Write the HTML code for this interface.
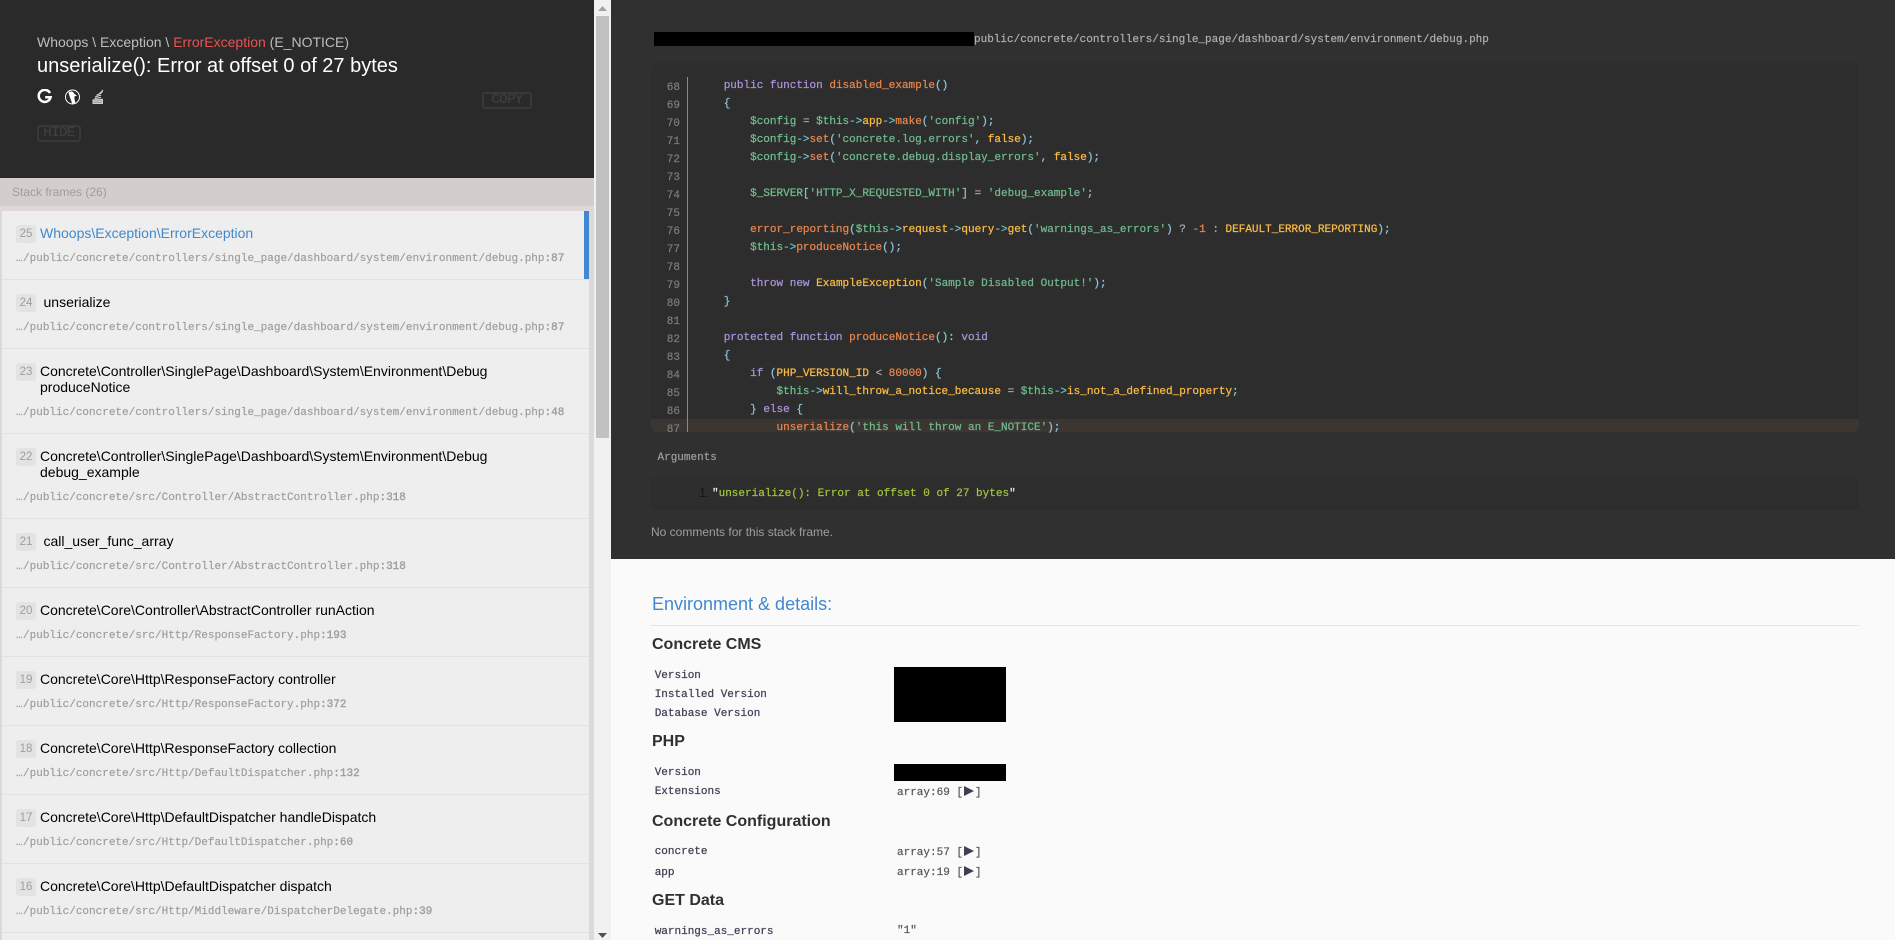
<!DOCTYPE html>
<html lang="en">
<head>
<meta charset="utf-8">
<title>Whoops! There was an error.</title>
<style>
*{box-sizing:border-box;margin:0;padding:0}
html,body{width:1895px;height:940px;overflow:hidden;background:#fafafa;font-family:"Liberation Sans",Arial,sans-serif}
.a{position:absolute;white-space:pre}
.m{font-family:"Liberation Mono",monospace;font-size:11px;-webkit-text-stroke:.2px}
#left{position:absolute;left:0;top:0;width:594px;height:940px;background:#ded8d8;overflow:hidden}
#hdr{position:absolute;left:0;top:0;width:594px;height:178px;background:#2a2a2a}
#sfh{position:absolute;left:0;top:178px;width:594px;height:28px;background:#d3cdcd}
.f{position:absolute;left:2px;width:587px;background:#eee;border-bottom:1px solid #e2e2e2}
.n{position:absolute;left:14px;top:14px;width:20px;height:18px;background:#e3e3e3;border-radius:3px;color:#a29d9d;font-size:11.5px;line-height:19px;text-align:center}
.t{position:absolute;left:38px;top:14px;font-size:14px;line-height:16px;color:#000;white-space:pre}
.t.x{left:41.5px}
.p{position:absolute;left:14px;bottom:13px;font-family:"Liberation Mono",monospace;font-size:11px;line-height:14px;color:#a29d9d;white-space:pre;-webkit-text-stroke:.2px}
.p b{font-weight:normal;-webkit-text-stroke:.4px}
.p i{font-style:normal;letter-spacing:.4px}
#sb{position:absolute;left:594px;top:0;width:17px;height:940px;background:#f1f1f1}
#th{position:absolute;left:2px;top:16px;width:13px;height:422px;background:#c1c1c1}
#dark{position:absolute;left:611px;top:0;width:1284px;height:559px;background:#303030}
.blk{position:absolute;background:#000}
.cb{position:absolute;background:#2d2d2d;border-radius:6px}
.ln{position:absolute;left:660px;width:20px;text-align:right;color:#7d7d7d;font-family:"Liberation Mono",monospace;font-size:11px;line-height:18px;margin-top:2px;-webkit-text-stroke:.2px}
#code{position:absolute;left:697.3px;top:77px;font-family:"Liberation Mono",monospace;font-size:11px;line-height:18px;color:#c9d1d9;white-space:pre;-webkit-text-stroke:.25px}
.k{color:#ab93dc}.fn{color:#e8854c}.v{color:#6cbf8b}.o{color:#68c3c4}.y{color:#fbbb42}.s{color:#6fb98c}.c{color:#8cc2d6}.g{color:#a9a9a9}.nm{color:#e8854c}
.h{position:absolute;left:652px;font-size:16px;font-weight:bold;color:#303030;line-height:20px;white-space:pre}
.l{position:absolute;left:654.7px;font-family:"Liberation Mono",monospace;font-size:11px;line-height:14px;color:#463c54;white-space:pre;-webkit-text-stroke:.25px}
.d{position:absolute;left:897px;font-family:"Liberation Mono",monospace;font-size:11px;line-height:14px;color:#555;white-space:pre;-webkit-text-stroke:.2px}
.d u{display:inline-block;width:0;height:0;border-left:10px solid #463c54;border-top:5.5px solid transparent;border-bottom:5.5px solid transparent;margin:0 1px 0 1px;vertical-align:-1px;text-decoration:none}
.btn{position:absolute;border:2px solid #383838;border-radius:3px;color:#3e3e3e;font-family:"Liberation Mono",monospace;font-size:14px;letter-spacing:-.6px;line-height:13px;text-align:center;-webkit-text-stroke:.3px}
</style>
</head>
<body>
<div id="left">
  <div id="hdr">
    <div class="a" style="left:37px;top:34px;font-size:14px;line-height:16px;color:#bebebe">Whoops \ Exception \ <span style="color:#e95353">ErrorException</span> (E_NOTICE)</div>
    <div class="a" style="left:37px;top:54px;font-size:20px;line-height:24px;color:#fff">unserialize(): Error at offset 0 of 27 bytes</div>
    <svg class="a" style="left:37px;top:89px" width="16" height="16" viewBox="0 0 16 16"><path d="M13 4A6 6 0 1 0 13.6 8.2H8.2" fill="none" stroke="#fff" stroke-width="2.5"/></svg>
    <svg class="a" style="left:64px;top:89px" width="17" height="16" viewBox="0 0 17 16"><circle cx="8.5" cy="8" r="7" fill="#2a2a2a" stroke="#fff" stroke-width="1"/><path d="M4.5 3.5C6 2 9.5 2 10.5 5L13 6.5 10.5 7.5C10 9 11 12 11.5 14L8 14.6C7.5 11.5 5.5 8 4.5 3.5Z" fill="#fff"/></svg>
    <svg class="a" style="left:92px;top:89px" width="13" height="16" viewBox="0 0 13 16"><path d="M0.5 10.5L11 9.8V15H0.5Z" fill="#cfcfcf"/><path d="M1.5 12.2L10 11.6M1.5 13.8L10 13.4" stroke="#8a8a8a" stroke-width=".7"/><path d="M2.5 9.6L9 8.4M3 8L9.2 6M4.5 6.2L9.6 3.8M7 5L10.2 2.2M9.6 3.8L10.8 .8" stroke="#d8d8d8" stroke-width="1.1" fill="none"/></svg>
    <div class="btn" style="left:482px;top:92px;width:50px;height:17px">COPY</div>
    <div class="btn" style="left:37px;top:125px;width:44px;height:17px">HIDE</div>
  </div>
  <div id="sfh"><div class="a" style="left:12px;top:7px;font-size:12px;line-height:14px;color:#a29d9d">Stack frames (26)</div></div>

  <div class="f" style="top:211px;height:69px"><div class="n">25</div><div class="t" style="color:#4288ce">Whoops\Exception\ErrorException</div><div class="p"><i>…</i>/public/concrete/controllers/single_page/dashboard/system/environment/debug.php<b>:87</b></div><div style="position:absolute;right:0;top:0;width:5px;height:68px;background:#4288ce"></div></div>
  <div class="f" style="top:280px;height:69px"><div class="n">24</div><div class="t x">unserialize</div><div class="p"><i>…</i>/public/concrete/controllers/single_page/dashboard/system/environment/debug.php<b>:87</b></div></div>
  <div class="f" style="top:349px;height:85px"><div class="n">23</div><div class="t">Concrete\Controller\SinglePage\Dashboard\System\Environment\Debug
produceNotice</div><div class="p"><i>…</i>/public/concrete/controllers/single_page/dashboard/system/environment/debug.php<b>:48</b></div></div>
  <div class="f" style="top:434px;height:85px"><div class="n">22</div><div class="t">Concrete\Controller\SinglePage\Dashboard\System\Environment\Debug
debug_example</div><div class="p"><i>…</i>/public/concrete/src/Controller/AbstractController.php<b>:318</b></div></div>
  <div class="f" style="top:519px;height:69px"><div class="n">21</div><div class="t x">call_user_func_array</div><div class="p"><i>…</i>/public/concrete/src/Controller/AbstractController.php<b>:318</b></div></div>
  <div class="f" style="top:588px;height:69px"><div class="n">20</div><div class="t">Concrete\Core\Controller\AbstractController runAction</div><div class="p"><i>…</i>/public/concrete/src/Http/ResponseFactory.php<b>:193</b></div></div>
  <div class="f" style="top:657px;height:69px"><div class="n">19</div><div class="t">Concrete\Core\Http\ResponseFactory controller</div><div class="p"><i>…</i>/public/concrete/src/Http/ResponseFactory.php<b>:372</b></div></div>
  <div class="f" style="top:726px;height:69px"><div class="n">18</div><div class="t">Concrete\Core\Http\ResponseFactory collection</div><div class="p"><i>…</i>/public/concrete/src/Http/DefaultDispatcher.php<b>:132</b></div></div>
  <div class="f" style="top:795px;height:69px"><div class="n">17</div><div class="t">Concrete\Core\Http\DefaultDispatcher handleDispatch</div><div class="p"><i>…</i>/public/concrete/src/Http/DefaultDispatcher.php<b>:60</b></div></div>
  <div class="f" style="top:864px;height:69px"><div class="n">16</div><div class="t">Concrete\Core\Http\DefaultDispatcher dispatch</div><div class="p"><i>…</i>/public/concrete/src/Http/Middleware/DispatcherDelegate.php<b>:39</b></div></div>
  <div class="f" style="top:933px;height:7px;border-bottom:0"></div>
</div>

<div id="sb">
  <div id="th"></div>
  <svg style="position:absolute;left:4px;top:6px" width="9" height="5" viewBox="0 0 9 5"><path d="M4.5 0L9 5H0Z" fill="#a3a3a3"/></svg>
  <svg style="position:absolute;left:4px;top:933px" width="9" height="5" viewBox="0 0 9 5"><path d="M0 0H9L4.5 5Z" fill="#505050"/></svg>
</div>

<div id="dark"></div>
<div class="blk" style="left:654px;top:32px;width:320px;height:14px"></div>
<div class="a m" style="left:974px;top:33px;line-height:14px;color:#b3aeae">public/concrete/controllers/single_page/dashboard/system/environment/debug.php</div>
<div class="cb" style="left:651px;top:63px;width:1208px;height:369px"></div>
<div style="position:absolute;left:651px;top:419px;width:1208px;height:13px;background:#3b3632;border-radius:0 0 6px 6px"></div>
<div style="position:absolute;left:687px;top:77px;width:1px;height:355px;background:#8a8a8a"></div>

<div class="ln" style="top:77px">68</div><div class="ln" style="top:95px">69</div><div class="ln" style="top:113px">70</div><div class="ln" style="top:131px">71</div><div class="ln" style="top:149px">72</div><div class="ln" style="top:167px">73</div><div class="ln" style="top:185px">74</div><div class="ln" style="top:203px">75</div><div class="ln" style="top:221px">76</div><div class="ln" style="top:239px">77</div><div class="ln" style="top:257px">78</div><div class="ln" style="top:275px">79</div><div class="ln" style="top:293px">80</div><div class="ln" style="top:311px">81</div><div class="ln" style="top:329px">82</div><div class="ln" style="top:347px">83</div><div class="ln" style="top:365px">84</div><div class="ln" style="top:383px">85</div><div class="ln" style="top:401px">86</div><div class="ln" style="top:419px;height:11px;overflow:hidden">87</div>

<div id="code">    <span class="k">public function</span> <span class="fn">disabled_example</span><span class="c">()</span>
    <span class="c">{</span>
        <span class="v">$config</span> <span class="g">=</span> <span class="v">$this</span><span class="o">-&gt;</span><span class="y">app</span><span class="o">-&gt;</span><span class="fn">make</span><span class="c">(</span><span class="s">'config'</span><span class="c">);</span>
        <span class="v">$config</span><span class="o">-&gt;</span><span class="fn">set</span><span class="c">(</span><span class="s">'concrete.log.errors'</span><span class="c">,</span> <span class="y">false</span><span class="c">);</span>
        <span class="v">$config</span><span class="o">-&gt;</span><span class="fn">set</span><span class="c">(</span><span class="s">'concrete.debug.display_errors'</span><span class="c">,</span> <span class="y">false</span><span class="c">);</span>

        <span class="v">$_SERVER</span><span class="c">[</span><span class="s">'HTTP_X_REQUESTED_WITH'</span><span class="c">]</span> <span class="g">=</span> <span class="s">'debug_example'</span><span class="c">;</span>

        <span class="fn">error_reporting</span><span class="c">(</span><span class="v">$this</span><span class="o">-&gt;</span><span class="y">request</span><span class="o">-&gt;</span><span class="y">query</span><span class="o">-&gt;</span><span class="y">get</span><span class="c">(</span><span class="s">'warnings_as_errors'</span><span class="c">)</span> <span class="g">?</span> <span class="nm">-1</span> <span class="g">:</span> <span class="y">DEFAULT_ERROR_REPORTING</span><span class="c">);</span>
        <span class="v">$this</span><span class="o">-&gt;</span><span class="fn">produceNotice</span><span class="c">();</span>

        <span class="k">throw new</span> <span class="y">ExampleException</span><span class="c">(</span><span class="s">'Sample Disabled Output!'</span><span class="c">);</span>
    <span class="c">}</span>

    <span class="k">protected function</span> <span class="fn">produceNotice</span><span class="c">():</span> <span class="k">void</span>
    <span class="c">{</span>
        <span class="k">if</span> <span class="c">(</span><span class="y">PHP_VERSION_ID</span> <span class="g">&lt;</span> <span class="nm">80000</span><span class="c">) {</span>
            <span class="v">$this</span><span class="o">-&gt;</span><span class="y">will_throw_a_notice_because</span> <span class="g">=</span> <span class="v">$this</span><span class="o">-&gt;</span><span class="y">is_not_a_defined_property</span><span class="c">;</span>
        <span class="c">}</span> <span class="k">else</span> <span class="c">{</span>
            <span class="fn">unserialize</span><span class="c">(</span><span class="s">'this will throw an E_NOTICE'</span><span class="c">);</span></div>

<div class="a m" style="left:657.5px;top:451px;line-height:14px;color:#a29d9d">Arguments</div>
<div class="cb" style="left:651px;top:477px;width:1208px;height:33px"></div>
<div class="a" style="left:699px;top:486px;font-size:13px;line-height:14px;color:#161616">1.</div>
<div class="a m" style="left:712px;top:487px;line-height:14px;color:#a4c639"><span style="color:#eee">"</span>unserialize(): Error at offset 0 of 27 bytes<span style="color:#eee">"</span></div>
<div class="a" style="left:651px;top:525px;font-size:12px;line-height:14px;color:#a29d9d">No comments for this stack frame.</div>

<div class="a" style="left:652px;top:593px;font-size:18px;line-height:22px;color:#4288ce">Environment &amp; details:</div>
<div style="position:absolute;left:651px;top:625px;width:1208px;height:1px;background:#e5e5e5"></div>

<div class="h" style="top:635px">Concrete CMS</div>
<div class="l" style="top:669px">Version</div>
<div class="l" style="top:688px">Installed Version</div>
<div class="l" style="top:707px">Database Version</div>
<div class="blk" style="left:894px;top:667px;width:112px;height:55px"></div>

<div class="h" style="top:732px">PHP</div>
<div class="l" style="top:766px">Version</div>
<div class="blk" style="left:894px;top:764px;width:112px;height:17px"></div>
<div class="l" style="top:785px">Extensions</div>
<div class="d" style="top:786px">array:69 [<u></u>]</div>

<div class="h" style="top:812px">Concrete Configuration</div>
<div class="l" style="top:845px">concrete</div>
<div class="d" style="top:846px">array:57 [<u></u>]</div>
<div class="l" style="top:866px">app</div>
<div class="d" style="top:866px">array:19 [<u></u>]</div>

<div class="h" style="top:891px">GET Data</div>
<div class="l" style="top:925px">warnings_as_errors</div>
<div class="d" style="top:924px">"1"</div>
</body>
</html>
